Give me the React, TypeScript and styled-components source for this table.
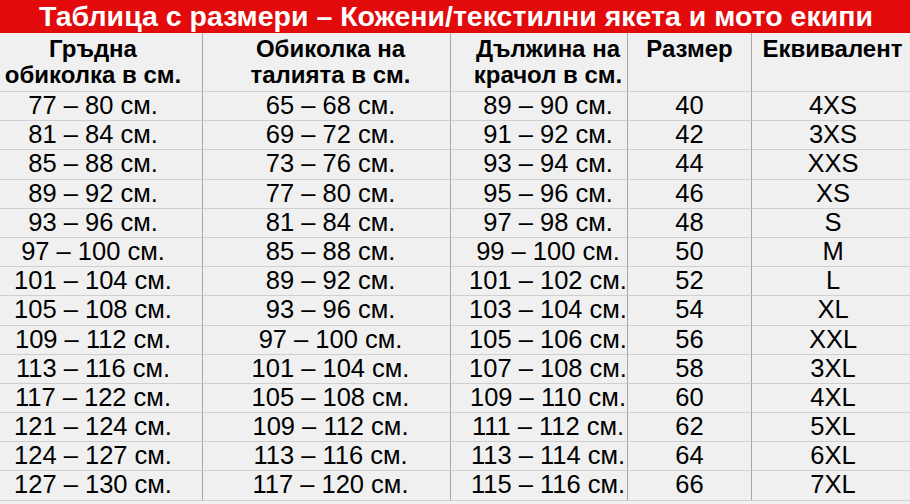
import React from "react";
import styled, { createGlobalStyle } from "styled-components";

const Global = createGlobalStyle`
  html, body { margin: 0; padding: 0; background: #f0f0f0; }
  body { font-family: "Liberation Sans", Arial, sans-serif; overflow: hidden; }
`;

const Page = styled.div`
  width: 910px;
  height: 504px;
  background: #f0f0f0;
  overflow: hidden;
`;

const TitleBar = styled.div`
  height: 33px;
  background: #e20a0a;
  color: #fff;
  font-weight: bold;
  font-size: 28.5px;
  line-height: 32px;
  text-align: center;
  white-space: nowrap;
  padding-left: 2px;
`;

const Table = styled.div`
  display: grid;
  grid-template-columns: 203px 248px 177px 124px 160px;
`;

const HeadCell = styled.div<{ $pl?: number; $pr?: number }>`
  height: 59px;
  box-sizing: border-box;
  border-bottom: 1px solid #cfcfcf;
  border-right: 1px solid #a8a8a8;
  font-weight: bold;
  font-size: 24px;
  line-height: 26px;
  padding-top: 3px;
  text-align: center;
  color: #000;
  white-space: nowrap;
  padding-left: ${(p) => p.$pl ?? 0}px;
  padding-right: ${(p) => p.$pr ?? 0}px;
  &:last-child { border-right: none; }
`;

const Cell = styled.div<{ $pl?: number; $pr?: number; $last?: boolean }>`
  height: 29.2px;
  box-sizing: border-box;
  border-bottom: 1px solid #cfcfcf;
  border-right: ${(p) => (p.$last ? "none" : "1px solid #a8a8a8")};
  font-size: 25.5px;
  line-height: 26px;
  text-align: center;
  color: #000;
  white-space: nowrap;
  padding-left: ${(p) => p.$pl ?? 0}px;
  padding-right: ${(p) => p.$pr ?? 0}px;
`;

const padL = [0, 8, 18, 0, 2];
const padR = [16, 0, 0, 0, 0];

const head = [
  ["Гръдна", "обиколка в см."],
  ["Обиколка на", "талията в см."],
  ["Дължина на", "крачол в см."],
  ["Размер"],
  ["Еквивалент"],
];

const rows: string[][] = [
  ["77 – 80 см.", "65 – 68 см.", "89 – 90 см.", "40", "4XS"],
  ["81 – 84 см.", "69 – 72 см.", "91 – 92 см.", "42", "3XS"],
  ["85 – 88 см.", "73 – 76 см.", "93 – 94 см.", "44", "XXS"],
  ["89 – 92 см.", "77 – 80 см.", "95 – 96 см.", "46", "XS"],
  ["93 – 96 см.", "81 – 84 см.", "97 – 98 см.", "48", "S"],
  ["97 – 100 см.", "85 – 88 см.", "99 – 100 см.", "50", "M"],
  ["101 – 104 см.", "89 – 92 см.", "101 – 102 см.", "52", "L"],
  ["105 – 108 см.", "93 – 96 см.", "103 – 104 см.", "54", "XL"],
  ["109 – 112 см.", "97 – 100 см.", "105 – 106 см.", "56", "XXL"],
  ["113 – 116 см.", "101 – 104 см.", "107 – 108 см.", "58", "3XL"],
  ["117 – 122 см.", "105 – 108 см.", "109 – 110 см.", "60", "4XL"],
  ["121 – 124 см.", "109 – 112 см.", "111 – 112 см.", "62", "5XL"],
  ["124 – 127 см.", "113 – 116 см.", "113 – 114 см.", "64", "6XL"],
  ["127 – 130 см.", "117 – 120 см.", "115 – 116 см.", "66", "7XL"],
];

export default function App() {
  return (
    <Page>
      <Global />
      <TitleBar>Таблица с размери – Кожени/текстилни якета и мото екипи</TitleBar>
      <Table>
        {head.map((h, i) => (
          <HeadCell key={i} $pl={padL[i]} $pr={padR[i]}>
            {h.map((l, j) => (
              <div key={j}>{l}</div>
            ))}
          </HeadCell>
        ))}
        {rows.map((r, ri) =>
          r.map((c, ci) => (
            <Cell key={ri + "-" + ci} $pl={padL[ci]} $pr={padR[ci]} $last={ci === 4}>
              {c}
            </Cell>
          ))
        )}
      </Table>
    </Page>
  );
}
